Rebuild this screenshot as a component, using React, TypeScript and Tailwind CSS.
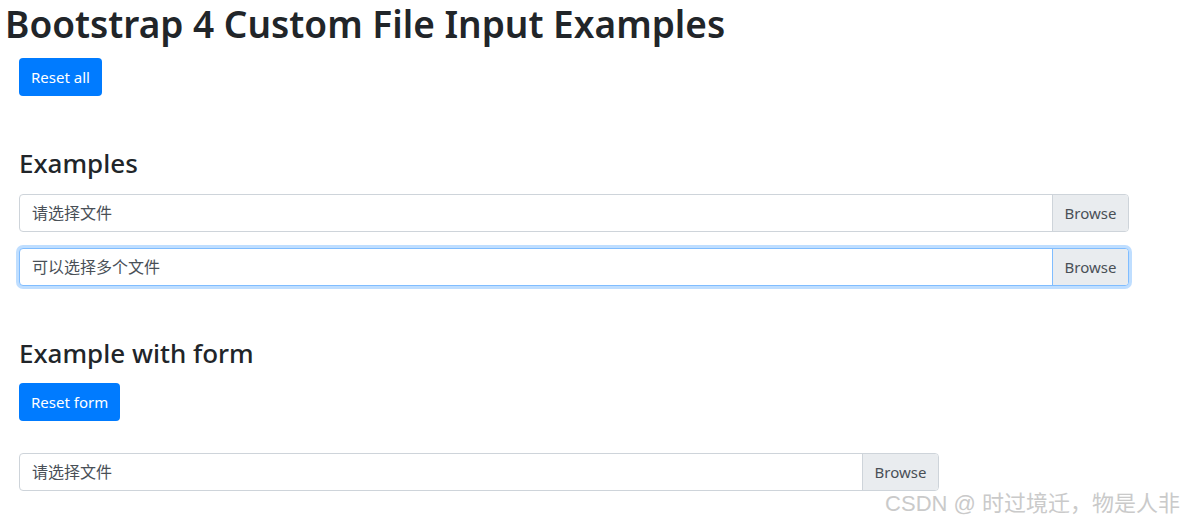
import React from 'react';

const font = { fontFamily: '"Segoe UI", "Noto Sans", "Noto Sans CJK SC", sans-serif' };

function FileInput({ label, focused, width }: { label: string; focused?: boolean; width: string }) {
  return (
    <div
      className={`flex h-[38px] ${width} rounded-[4px] border bg-white ${
        focused ? 'border-[#80bdff] shadow-[0_0_0_3px_rgba(0,123,255,0.25)]' : 'border-[#ced4da]'
      }`}
    >
      <div className="flex flex-1 items-center pl-3 text-base text-[#495057]">{label}</div>
      <div
        className={`flex w-[76px] items-center justify-center rounded-r-[3px] border-l bg-[#e9ecef] text-[15px] text-[#495057] ${
          focused ? 'border-[#80bdff]' : 'border-[#ced4da]'
        }`}
      >
        Browse
      </div>
    </div>
  );
}

export default function App() {
  return (
    <div className="relative h-[522px] w-[1184px] overflow-hidden bg-white text-[#212529]" style={font}>
      <h1 className="ml-[5px] text-[37px] font-semibold leading-[48px]">Bootstrap 4 Custom File Input Examples</h1>
      <div className="px-[19px]">
        <button className="mt-[10px] h-[38px] rounded-[4px] bg-[#007bff] px-3 text-[15px] text-white">Reset all</button>

        <h3 className="mt-[50px] text-[26px] font-medium leading-[34px]">Examples</h3>
        <div className="mt-[14px] flex flex-col gap-4">
          <FileInput label="请选择文件" width="w-[1110px]" />
          <FileInput label="可以选择多个文件" width="w-[1110px]" focused />
        </div>

        <h3 className="mt-[50px] text-[26px] font-medium leading-[34px]">Example with form</h3>
        <button className="mt-[13px] h-[38px] rounded-[4px] bg-[#007bff] px-3 text-[15px] text-white">Reset form</button>
        <div className="mt-[32px]">
          <FileInput label="请选择文件" width="w-[920px]" />
        </div>
      </div>
      <div className="absolute bottom-[4px] right-[4px] text-[22px] leading-[28px] text-[#cacaca]" style={{ fontFamily: '"Liberation Sans", "Noto Sans CJK SC", sans-serif' }}>
        CSDN @ 时过境迁，物是人非
      </div>
    </div>
  );
}
